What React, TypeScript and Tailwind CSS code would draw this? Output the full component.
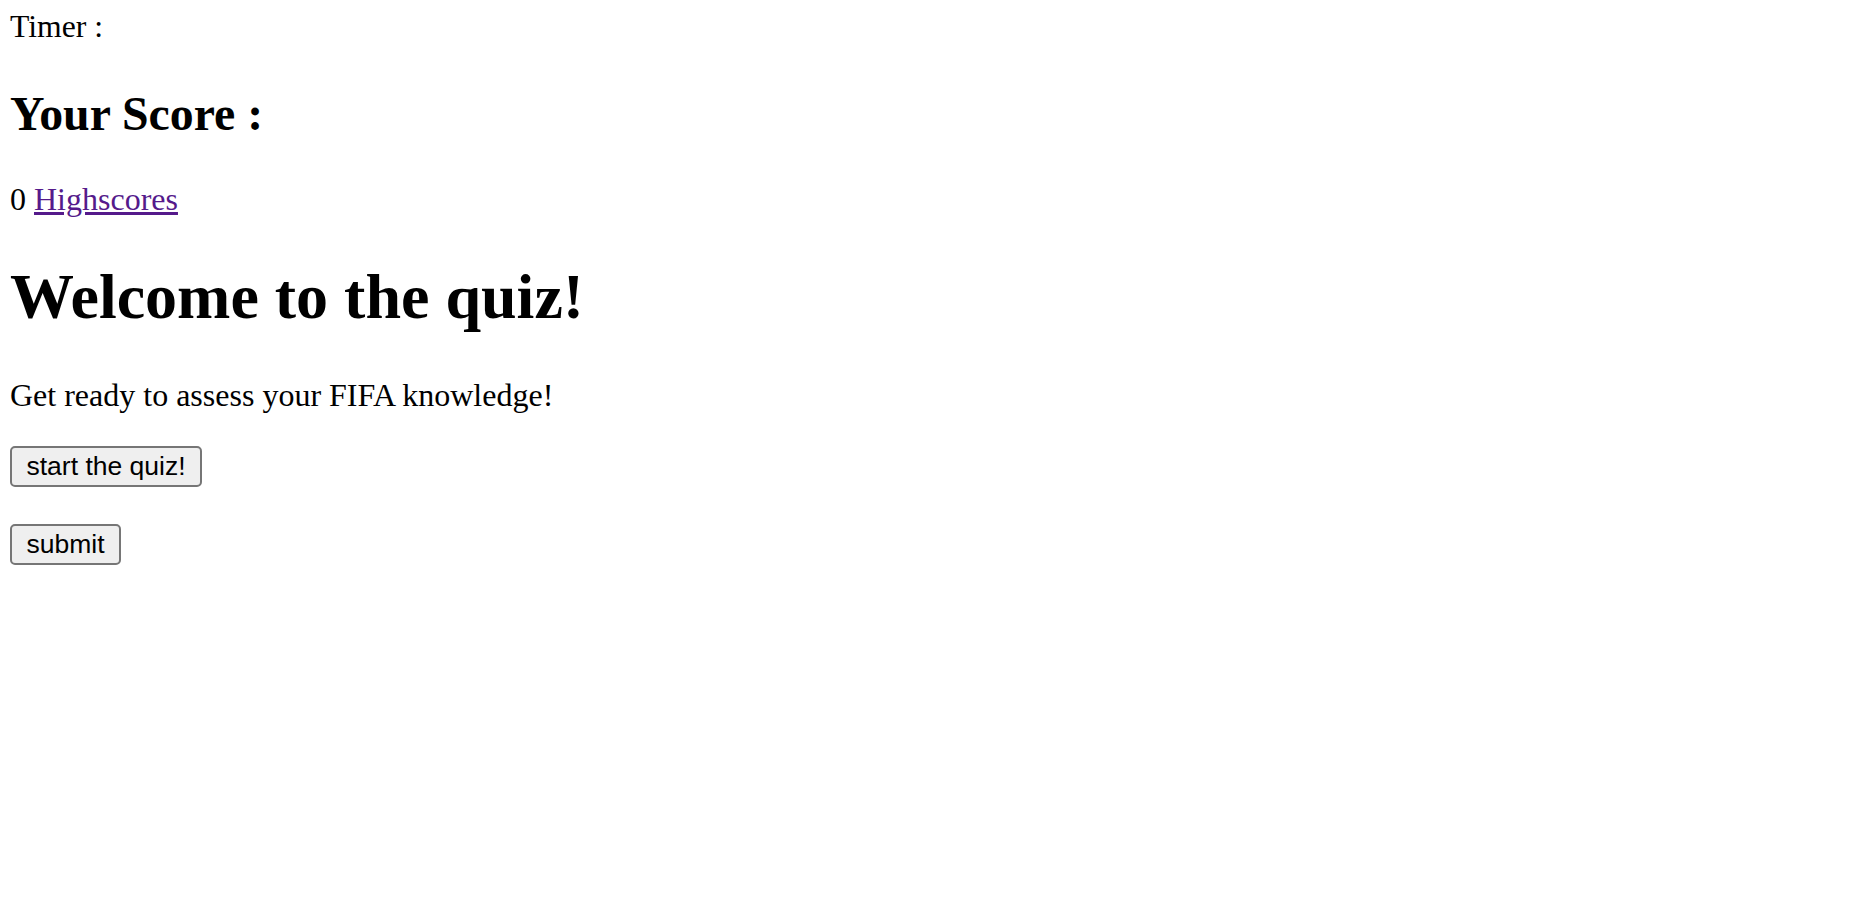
export default function App() {
  return (
    <div className="min-h-screen bg-white pl-[10px] pt-[9px] text-black" style={{ fontFamily: '"Liberation Serif", "Times New Roman", serif' }}>
      <div className="text-[31.7px] leading-[36.2px]">Timer :</div>
      <h2 className="mt-[43px] text-[47.8px] font-bold leading-[52.9px]">Your Score :</h2>
      <p className="mt-[39.5px] text-[32px] leading-[36.2px]">
        0{" "}
        <a href="#" className="text-[#551a8b] underline">
          Highscores
        </a>
      </p>
      <h1 className="mt-[44.4px] text-[64px] font-bold leading-[72.4px]">Welcome to the quiz!</h1>
      <p className="mt-[43.4px] text-[32px] leading-[36.2px]">Get ready to assess your FIFA knowledge!</p>
      <div className="mt-[33.2px]">
        <button
          className="rounded-[5px] border-2 border-[#767676] bg-[#efefef] px-[14.5px] py-[3px] text-[26.5px] leading-[30.6px] text-black"
          style={{ fontFamily: '"Liberation Sans", Arial, sans-serif' }}
        >
          start the quiz!
        </button>
      </div>
      <div className="mt-[37px]">
        <button
          className="rounded-[5px] border-2 border-[#767676] bg-[#efefef] px-[14.5px] py-[3px] text-[26.5px] leading-[30.6px] text-black"
          style={{ fontFamily: '"Liberation Sans", Arial, sans-serif' }}
        >
          submit
        </button>
      </div>
    </div>
  );
}
